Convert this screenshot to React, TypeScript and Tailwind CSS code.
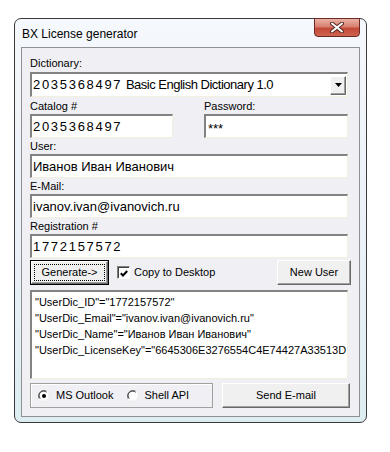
import React from "react";

const sunken =
  "bg-white border-t-2 border-l-2 border-b border-r border-t-[#828282] border-l-[#828282] border-b-[#f3efdf] border-r-[#f3efdf]";
const raised =
  "bg-[#f0f0f0] border border-t-white border-l-white border-b-[#696969] border-r-[#696969] shadow-[inset_-1px_-1px_0_#a0a0a0]";

function Label({ children, className = "" }: { children: React.ReactNode; className?: string }) {
  return <div className={`h-[13px] text-[11px] leading-[13px] text-black ${className}`}>{children}</div>;
}

function Field({ children, className = "" }: { children: React.ReactNode; className?: string }) {
  return (
    <div className={`${sunken} mt-[1px] h-[24px] flex items-center pl-[1px] text-[13px] text-black overflow-hidden whitespace-nowrap ${className}`}>
      {children}
    </div>
  );
}

function Radio({ checked }: { checked?: boolean }) {
  return (
    <svg width="12" height="12" viewBox="0 0 12 12">
      <circle cx="6" cy="6" r="5.5" fill="white" />
      <path d="M1.2 8.5 A5.5 5.5 0 0 1 8.5 1.2" stroke="#808080" strokeWidth="1.2" fill="none" />
      <path d="M2.3 8.6 A4.3 4.3 0 0 1 8.6 2.3" stroke="#404040" strokeWidth="1" fill="none" />
      <path d="M10.8 3.5 A5.5 5.5 0 0 1 3.5 10.8" stroke="#e8e8e8" strokeWidth="1" fill="none" />
      {checked && <circle cx="6" cy="6" r="2" fill="black" />}
    </svg>
  );
}

export default function App() {
  return (
    <div className="w-[390px] h-[452px] bg-white pt-[18px] pl-[14px] font-['Liberation_Sans',Arial,sans-serif]">
      <div className="w-[353px] h-[405px] border border-[#3a3a3a] rounded-[7px] bg-[linear-gradient(180deg,#f5f8fc_0%,#eaf0f7_60%,#dcedf1_100%)] flex flex-col">
        {/* title bar */}
        <div className="h-[28px] flex items-start justify-between">
          <div className="pl-[7px] pt-[8px] text-[12px] leading-[14px] text-black">BX License generator</div>
          <div className="-mt-px mr-[6px] w-[46px] h-[19px] rounded-b-[4px] border border-[#6b2a24] bg-[linear-gradient(180deg,#eab1a5_0%,#d8806f_45%,#c34a38_55%,#cd6450_100%)] flex items-center justify-center">
            <svg width="14" height="11" viewBox="0 0 14 11">
              <path d="M2 1.5 L12 9.5 M12 1.5 L2 9.5" stroke="#5a2a24" strokeWidth="4" strokeLinecap="round" />
              <path d="M2 1.5 L12 9.5 M12 1.5 L2 9.5" stroke="white" strokeWidth="2" strokeLinecap="round" />
            </svg>
          </div>
        </div>

        {/* client area */}
        <div className="mx-[6px] h-[370px] border border-[#8e9094] bg-[#f0f0f4] pl-[8px] pr-[8px] pt-[9px] flex flex-col">
          <Label>Dictionary:</Label>
          <div className={`${sunken} mt-[2px] w-[318px] h-[25px] flex items-center justify-between pl-[1px] text-[13px] overflow-hidden whitespace-nowrap`}>
            <span>
              <span className="tracking-[1.7px]">2035368497</span>{" "}
              <span className="tracking-[-0.5px]">Basic English Dictionary 1.0</span>
            </span>
            <div className={`${raised} w-[16px] h-[19px] mr-[1px] flex items-center justify-center shrink-0`}>
              <svg width="7" height="4" viewBox="0 0 7 4">
                <path d="M0 0 H7 L3.5 4 Z" fill="black" />
              </svg>
            </div>
          </div>

          <div className="mt-[3px] flex gap-[31px]">
            <div className="w-[143px]">
              <Label>Catalog #</Label>
              <Field>
                <span className="tracking-[1.7px]">2035368497</span>
              </Field>
            </div>
            <div className="w-[144px]">
              <Label>Password:</Label>
              <Field className="items-start pt-[3px] pl-[2px] text-[10px]">***</Field>
            </div>
          </div>

          <div className="mt-[2px] w-[318px]">
            <Label>User:</Label>
            <Field>Иванов Иван Иванович</Field>
          </div>
          <div className="mt-[2px] w-[318px]">
            <Label>E-Mail:</Label>
            <Field>ivanov.ivan@ivanovich.ru</Field>
          </div>
          <div className="mt-[2px] w-[318px]">
            <Label>Registration #</Label>
            <Field>
              <span className="tracking-[1.7px]">1772157572</span>
            </Field>
          </div>

          {/* buttons row */}
          <div className="mt-[2px] h-[25px] flex items-center">
            <div className="w-[79px] h-[25px] border border-black">
              <div className={`${raised} w-full h-full flex items-center justify-center p-[2px]`}>
                <div className="w-full h-full border border-dotted border-black flex items-center justify-center text-[11px]">
                  Generate-&gt;
                </div>
              </div>
            </div>
            <div className="ml-[8px] w-[13px] h-[13px] border-t border-l border-t-[#808080] border-l-[#808080] border-b border-r border-b-white border-r-white">
              <div className="w-full h-full border-t border-l border-t-[#404040] border-l-[#404040] bg-white flex items-center justify-center">
                <svg width="8" height="7" viewBox="0 0 8 7">
                  <path d="M0.8 3.2 L3 5.5 L7.2 1" stroke="black" strokeWidth="2" fill="none" />
                </svg>
              </div>
            </div>
            <span className="ml-[4px] text-[11px]">Copy to Desktop</span>
            <div className={`${raised} ml-auto w-[74px] h-[25px] flex items-center justify-center text-[11px]`}>New User</div>
          </div>

          {/* text area */}
          <div className={`${sunken} mt-[5px] w-[318px] h-[89px] pl-[3px] pt-[2px] text-[11px] leading-[16px] overflow-hidden whitespace-nowrap`}>
            <div>"UserDic_ID"="1772157572"</div>
            <div>"UserDic_Email"="ivanov.ivan@ivanovich.ru"</div>
            <div>"UserDic_Name"="Иванов Иван Иванович"</div>
            <div>"UserDic_LicenseKey"="6645306E3276554C4E74427A33513D</div>
          </div>

          {/* bottom row */}
          <div className="mt-[4px] h-[25px] flex items-stretch">
            <div className="w-[183px] border border-[#a0a0a0] shadow-[inset_1px_1px_0_white] flex items-center pl-[7px] text-[11px]">
              <Radio checked />
              <span className="ml-[6px]">MS Outlook</span>
              <span className="ml-[14px]">
                <Radio />
              </span>
              <span className="ml-[5px]">Shell API</span>
            </div>
            <div className={`${raised} ml-[9px] w-[128px] flex items-center justify-center text-[11px]`}>Send E-mail</div>
          </div>
        </div>
      </div>
    </div>
  );
}
